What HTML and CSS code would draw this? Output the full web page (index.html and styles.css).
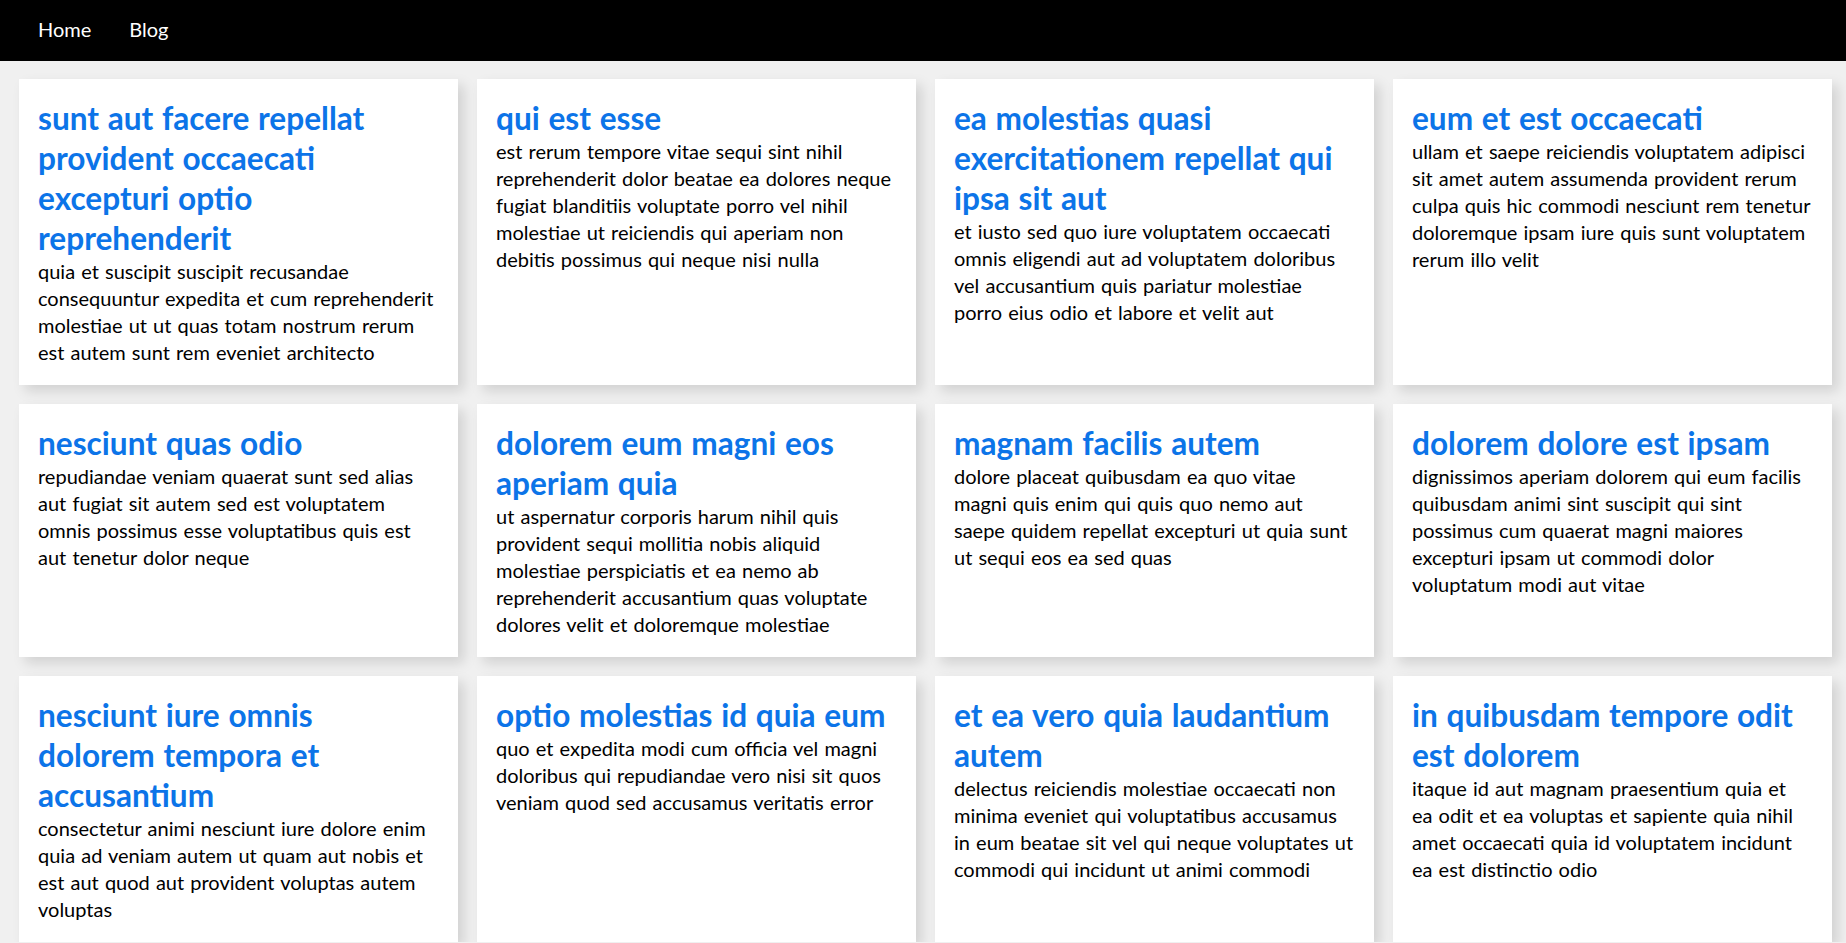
FILE: index.html
```html
<!DOCTYPE html>
<html lang="en">
<head>
<meta charset="utf-8">
<title>Blog</title>
<link rel="stylesheet" href="styles.css">
</head>
<body>
<nav class="nav">
  <a class="nav-link" href="#">Home</a>
  <a class="nav-link" href="#">Blog</a>
</nav>
<main class="posts">
  <article class="card">
    <h2 class="card-title">sunt aut facere repellat<br>provident occaecati<br>excepturi optio<br>reprehenderit</h2>
    <p class="card-body">quia et suscipit suscipit recusandae<br>consequuntur expedita et cum reprehenderit<br>molestiae ut ut quas totam nostrum rerum<br>est autem sunt rem eveniet architecto</p>
  </article>
  <article class="card">
    <h2 class="card-title">qui est esse</h2>
    <p class="card-body">est rerum tempore vitae sequi sint nihil<br>reprehenderit dolor beatae ea dolores neque<br>fugiat blanditiis voluptate porro vel nihil<br>molestiae ut reiciendis qui aperiam non<br>debitis possimus qui neque nisi nulla</p>
  </article>
  <article class="card">
    <h2 class="card-title">ea molestias quasi<br>exercitationem repellat qui<br>ipsa sit aut</h2>
    <p class="card-body">et iusto sed quo iure voluptatem occaecati<br>omnis eligendi aut ad voluptatem doloribus<br>vel accusantium quis pariatur molestiae<br>porro eius odio et labore et velit aut</p>
  </article>
  <article class="card">
    <h2 class="card-title">eum et est occaecati</h2>
    <p class="card-body">ullam et saepe reiciendis voluptatem adipisci<br>sit amet autem assumenda provident rerum<br>culpa quis hic commodi nesciunt rem tenetur<br>doloremque ipsam iure quis sunt voluptatem<br>rerum illo velit</p>
  </article>
  <article class="card">
    <h2 class="card-title">nesciunt quas odio</h2>
    <p class="card-body">repudiandae veniam quaerat sunt sed alias<br>aut fugiat sit autem sed est voluptatem<br>omnis possimus esse voluptatibus quis est<br>aut tenetur dolor neque</p>
  </article>
  <article class="card">
    <h2 class="card-title">dolorem eum magni eos<br>aperiam quia</h2>
    <p class="card-body">ut aspernatur corporis harum nihil quis<br>provident sequi mollitia nobis aliquid<br>molestiae perspiciatis et ea nemo ab<br>reprehenderit accusantium quas voluptate<br>dolores velit et doloremque molestiae</p>
  </article>
  <article class="card">
    <h2 class="card-title">magnam facilis autem</h2>
    <p class="card-body">dolore placeat quibusdam ea quo vitae<br>magni quis enim qui quis quo nemo aut<br>saepe quidem repellat excepturi ut quia sunt<br>ut sequi eos ea sed quas</p>
  </article>
  <article class="card">
    <h2 class="card-title">dolorem dolore est ipsam</h2>
    <p class="card-body">dignissimos aperiam dolorem qui eum facilis<br>quibusdam animi sint suscipit qui sint<br>possimus cum quaerat magni maiores<br>excepturi ipsam ut commodi dolor<br>voluptatum modi aut vitae</p>
  </article>
  <article class="card">
    <h2 class="card-title">nesciunt iure omnis<br>dolorem tempora et<br>accusantium</h2>
    <p class="card-body">consectetur animi nesciunt iure dolore enim<br>quia ad veniam autem ut quam aut nobis et<br>est aut quod aut provident voluptas autem<br>voluptas</p>
  </article>
  <article class="card">
    <h2 class="card-title">optio molestias id quia eum</h2>
    <p class="card-body">quo et expedita modi cum officia vel magni<br>doloribus qui repudiandae vero nisi sit quos<br>veniam quod sed accusamus veritatis error</p>
  </article>
  <article class="card">
    <h2 class="card-title">et ea vero quia laudantium<br>autem</h2>
    <p class="card-body">delectus reiciendis molestiae occaecati non<br>minima eveniet qui voluptatibus accusamus<br>in eum beatae sit vel qui neque voluptates ut<br>commodi qui incidunt ut animi commodi</p>
  </article>
  <article class="card">
    <h2 class="card-title">in quibusdam tempore odit<br>est dolorem</h2>
    <p class="card-body">itaque id aut magnam praesentium quia et<br>ea odit et ea voluptas et sapiente quia nihil<br>amet occaecati quia id voluptatem incidunt<br>ea est distinctio odio</p>
  </article>
</main>
</body>
</html>
```
FILE: styles.css
```css
html, body {
  margin: 0;
  padding: 0;
}
body {
  background: #f0f0f0;
  font-family: Lato, "Liberation Sans", sans-serif;
  color: #000;
  overflow: hidden;
}
.nav {
  height: 61px;
  background: #000;
  display: flex;
  align-items: center;
  padding: 0 0 0 19px;
  box-sizing: border-box;
}
.nav-link {
  color: #fff;
  text-decoration: none;
  font-size: 20px;
  padding: 0 19px;
  margin-top: -3px;
}
.posts {
  display: grid;
  grid-template-columns: repeat(4, 439px);
  column-gap: 19px;
  row-gap: 19px;
  padding: 18px 14px 0 19px;
}
.card {
  background: #fff;
  padding: 19px;
  box-shadow: 6px 6px 12px rgba(0, 0, 0, 0.13);
}
.card-title {
  margin: 0;
  font-size: 31.6px;
  line-height: 40px;
  font-weight: 700;
  color: #0c74e8;
  word-spacing: 1px;
}
.card-body {
  margin: 0;
  font-size: 20px;
  line-height: 27px;
  word-spacing: 1px;
}
```
